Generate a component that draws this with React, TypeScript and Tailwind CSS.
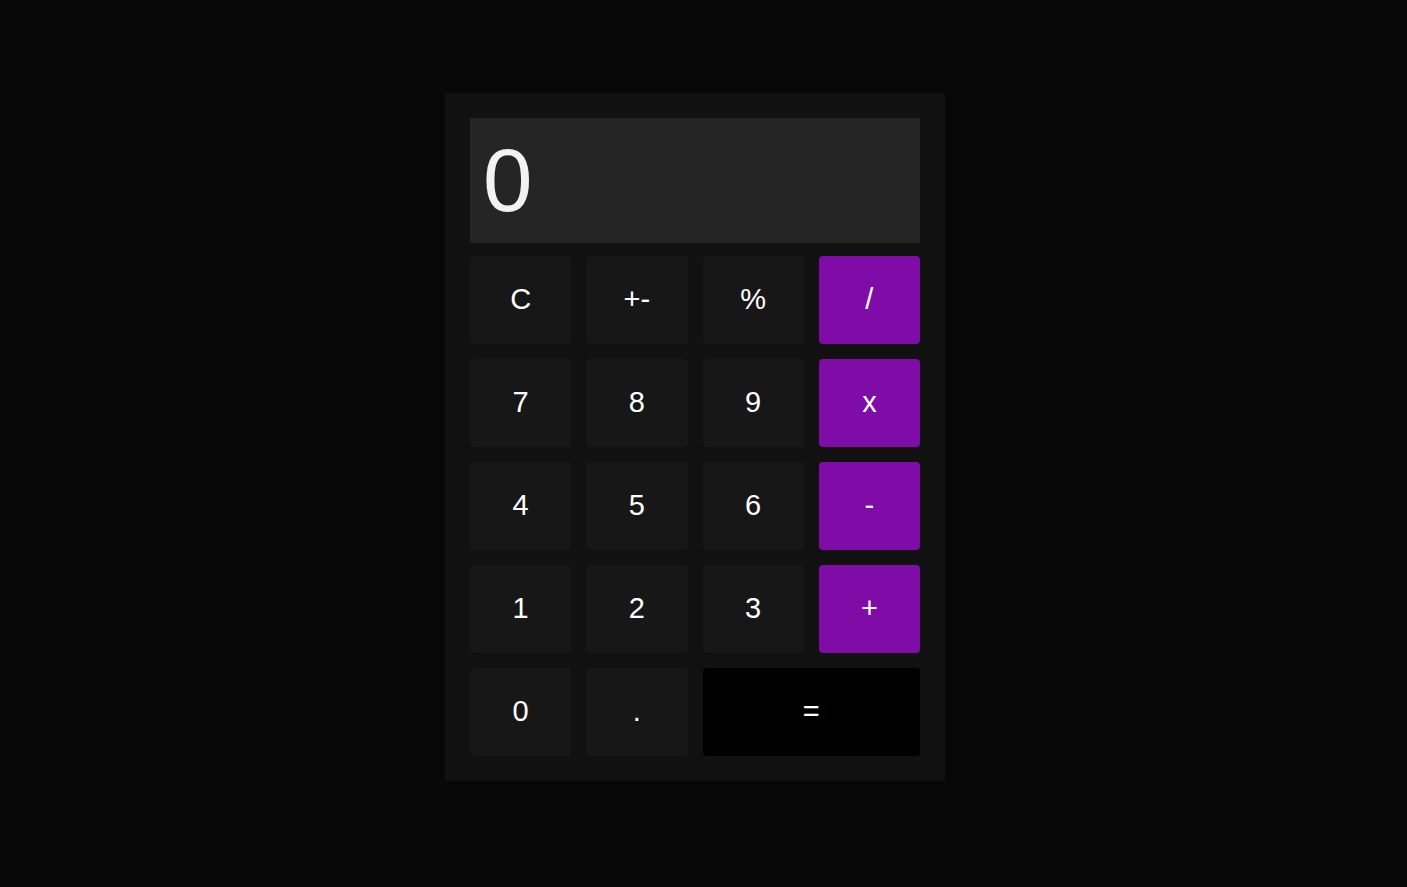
import React from "react";

const keys: { label: string; kind: "num" | "op" | "eq" }[] = [
  { label: "C", kind: "num" },
  { label: "+-", kind: "num" },
  { label: "%", kind: "num" },
  { label: "/", kind: "op" },
  { label: "7", kind: "num" },
  { label: "8", kind: "num" },
  { label: "9", kind: "num" },
  { label: "x", kind: "op" },
  { label: "4", kind: "num" },
  { label: "5", kind: "num" },
  { label: "6", kind: "num" },
  { label: "-", kind: "op" },
  { label: "1", kind: "num" },
  { label: "2", kind: "num" },
  { label: "3", kind: "num" },
  { label: "+", kind: "op" },
  { label: "0", kind: "num" },
  { label: ".", kind: "num" },
  { label: "=", kind: "eq" },
];

export default function App() {
  return (
    <div
      className="min-h-screen w-full bg-[#080808] pt-[93px] pl-[445px]"
      style={{ fontFamily: '"Liberation Sans", Arial, sans-serif' }}
    >
      <div className="w-[500px] bg-[#111111] p-[25px]">
        <div className="h-[125px] mb-[13px] bg-[#252525] flex items-center px-[13px] text-[89px] leading-none text-[#f2f2f2]">
          0
        </div>
        <div className="grid grid-cols-4 gap-[15px]">
          {keys.map((k) => (
            <button
              key={k.label}
              className={
                "h-[88px] rounded-[4px] flex items-center justify-center text-[29px] text-white " +
                (k.kind === "op"
                  ? "bg-[#800ca8]"
                  : k.kind === "eq"
                  ? "bg-black col-span-2"
                  : "bg-[#171717]")
              }
            >
              {k.label}
            </button>
          ))}
        </div>
      </div>
    </div>
  );
}
